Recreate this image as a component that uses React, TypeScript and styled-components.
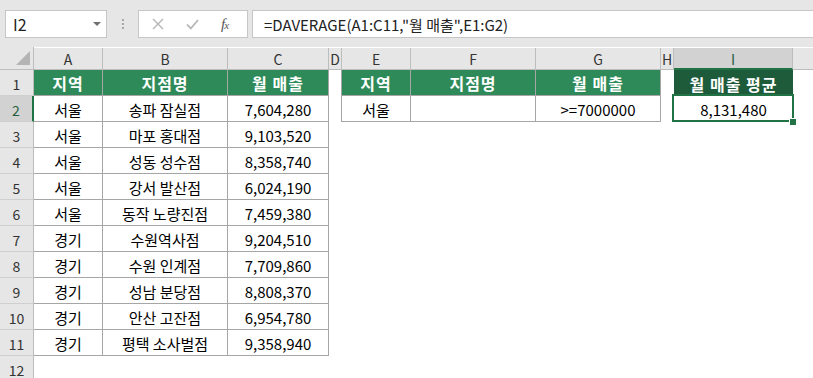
import React from 'react';
import styled, { createGlobalStyle, css } from 'styled-components';

const GREEN = '#2e8a59';
const DARK_GREEN = '#1e5b3b';
const SEL = '#217346';
const LINE = '#a6a6a6';
const FONT = `"Noto Sans CJK KR", "Noto Sans", sans-serif`;

const Global = createGlobalStyle`
  html, body { margin: 0; padding: 0; background: #ffffff; }
  body { font-family: ${FONT}; overflow: hidden; }
  * { box-sizing: border-box; }
`;

const Page = styled.div`
  width: 813px;
  height: 378px;
  overflow: hidden;
  background: #ffffff;
`;

const FormulaBar = styled.div`
  height: 47px;
  background: #e6e6e6;
  display: flex;
  align-items: flex-start;
  padding: 10px 0 0 5px;
`;

const NameBox = styled.div`
  width: 102px;
  height: 28px;
  background: #ffffff;
  border: 1px solid #c6c6c6;
  display: flex;
  align-items: center;
  justify-content: space-between;
  padding: 0 5px 0 7px;
  font-size: 16px;
  color: #222;
`;

const Caret = styled.span`
  width: 0;
  height: 0;
  border-left: 4px solid transparent;
  border-right: 4px solid transparent;
  border-top: 4px solid #6f6f6f;
`;

const Grip = styled.div`
  width: 31px;
  height: 28px;
  display: flex;
  flex-direction: column;
  align-items: center;
  justify-content: center;
  gap: 2px;
`;

const GripDot = styled.span`
  width: 2px;
  height: 2px;
  background: #a8a8a8;
`;

const FxBox = styled.div`
  width: 110px;
  height: 28px;
  background: #ffffff;
  border: 1px solid #c6c6c6;
  display: flex;
  align-items: center;
  padding-left: 13px;
  gap: 22px;
`;

const FxLabel = styled.span`
  font-family: "Liberation Serif", serif;
  font-style: italic;
  font-size: 15px;
  color: #555;
  letter-spacing: -1px;
  & small { font-size: 11px; }
`;

const Input = styled.div`
  flex: 1;
  margin-left: 4px;
  height: 28px;
  background: #ffffff;
  border: 1px solid #c6c6c6;
  border-right: none;
  display: flex;
  align-items: center;
  padding-left: 11px;
  font-size: 15px;
  color: #222;
  white-space: nowrap;
`;

const Sheet = styled.div`
  display: grid;
  grid-template-columns: 34px 69px 125px 101px 13px 69px 125px 125px 13px 119px 1fr;
  grid-template-rows: 23px;
  grid-auto-rows: 26px;
`;

const Corner = styled.div`
  background: #e6e6e6;
  border-right: 1px solid #bdbdbd;
  border-bottom: 1px solid #bdbdbd;
  position: relative;
`;

const CornerTri = styled.span`
  position: absolute;
  right: 3px;
  bottom: 4px;
  width: 0;
  height: 0;
  border-left: 14px solid transparent;
  border-bottom: 14px solid #b4b4b4;
`;

const ColHead = styled.div<{ $active?: boolean; $last?: boolean }>`
  background: ${(p) => (p.$active ? '#d2d2d2' : '#e6e6e6')};
  border-right: ${(p) => (p.$last ? 'none' : '1px solid #bdbdbd')};
  border-bottom: ${(p) => (p.$active ? `2px solid ${SEL}` : '1px solid #bdbdbd')};
  display: flex;
  align-items: center;
  justify-content: center;
  font-size: 14px;
  color: ${(p) => (p.$active ? '#1f5f3d' : '#333')};
  padding-top: ${(p) => (p.$active ? '2px' : '1px')};
  clip-path: inset(1px 0 0 0);
`;

const RowHead = styled.div<{ $active?: boolean }>`
  background: ${(p) => (p.$active ? '#d2d2d2' : '#e6e6e6')};
  border-right: ${(p) => (p.$active ? `2px solid ${SEL}` : '1px solid #bdbdbd')};
  border-bottom: 1px solid #cfcfcf;
  display: flex;
  align-items: center;
  justify-content: center;
  padding-top: 2px;
  font-size: 14px;
  color: ${(p) => (p.$active ? '#1f5f3d' : '#333')};
`;

type Kind = 'blank' | 'head' | 'headDark' | 'data' | 'selected';

const Cell = styled.div<{ $kind: Kind; $ruleRight?: boolean }>`
  display: flex;
  align-items: center;
  justify-content: center;
  padding-top: 1px;
  font-size: 15px;
  color: #000;
  white-space: nowrap;
  position: relative;
  ${(p) =>
    p.$kind === 'blank' &&
    css`
      border-right: ${p.$ruleRight ? `1px solid ${LINE}` : 'none'};
    `}
  ${(p) =>
    p.$kind !== 'blank' &&
    css`
      border-right: 1px solid ${LINE};
      border-bottom: 1px solid ${LINE};
    `}
  ${(p) =>
    p.$kind === 'head' &&
    css`
      background: ${GREEN};
      color: #ffffff;
      font-weight: 700;
      font-size: 16px;
      letter-spacing: 1px;
    `}
  ${(p) =>
    p.$kind === 'headDark' &&
    css`
      background: ${DARK_GREEN};
      color: #ffffff;
      font-weight: 700;
      font-size: 16px;
      letter-spacing: 1px;
      border-right: none;
      border-bottom: none;
    `}
  ${(p) =>
    p.$kind === 'selected' &&
    css`
      border-right: none;
      border-bottom: 1px solid transparent;
      &::after {
        content: '';
        position: absolute;
        top: -2px;
        left: -2px;
        right: -1px;
        bottom: -1px;
        border: 2px solid ${SEL};
      }
      &::before {
        content: '';
        position: absolute;
        right: -3px;
        bottom: -4px;
        width: 6px;
        height: 6px;
        background: ${SEL};
        outline: 1px solid #ffffff;
        z-index: 1;
      }
    `}
`;

const cols = ['A', 'B', 'C', 'D', 'E', 'F', 'G', 'H', 'I', ''];

const data: [string, string, string][] = [
  ['서울', '송파 잠실점', '7,604,280'],
  ['서울', '마포 홍대점', '9,103,520'],
  ['서울', '성동 성수점', '8,358,740'],
  ['서울', '강서 발산점', '6,024,190'],
  ['서울', '동작 노량진점', '7,459,380'],
  ['경기', '수원역사점', '9,204,510'],
  ['경기', '수원 인계점', '7,709,860'],
  ['경기', '성남 분당점', '8,808,370'],
  ['경기', '안산 고잔점', '6,954,780'],
  ['경기', '평택 소사벌점', '9,358,940'],
];

type CellSpec = { kind: Kind; text?: string; ruleRight?: boolean };

function rowCells(r: number): CellSpec[] {
  const blank: CellSpec = { kind: 'blank' };
  if (r === 1) {
    return [
      { kind: 'head', text: '지역' },
      { kind: 'head', text: '지점명' },
      { kind: 'head', text: '월 매출' },
      { kind: 'blank', ruleRight: true },
      { kind: 'head', text: '지역' },
      { kind: 'head', text: '지점명' },
      { kind: 'head', text: '월 매출' },
      blank,
      { kind: 'headDark', text: '월 매출 평균' },
      blank,
    ];
  }
  const d = data[r - 2];
  const left: CellSpec[] = d
    ? [
        { kind: 'data', text: d[0] },
        { kind: 'data', text: d[1] },
        { kind: 'data', text: d[2] },
      ]
    : [blank, blank, blank];
  if (r === 2) {
    return [
      ...left,
      { kind: 'blank', ruleRight: true },
      { kind: 'data', text: '서울' },
      { kind: 'data', text: '' },
      { kind: 'data', text: '>=7000000' },
      blank,
      { kind: 'selected', text: '8,131,480' },
      blank,
    ];
  }
  return [...left, blank, blank, blank, blank, blank, blank, blank];
}

export default function App() {
  const rows = Array.from({ length: 12 }, (_, i) => i + 1);
  return (
    <Page>
      <Global />
      <FormulaBar>
        <NameBox>
          <span>I2</span>
          <Caret />
        </NameBox>
        <Grip>
          <GripDot />
          <GripDot />
          <GripDot />
        </Grip>
        <FxBox>
          <svg width="12" height="12" viewBox="0 0 12 12">
            <path d="M1 1 L11 11 M11 1 L1 11" stroke="#b5b5b5" strokeWidth="1.4" fill="none" />
          </svg>
          <svg width="13" height="11" viewBox="0 0 13 11">
            <path d="M1 5.5 L4.8 9.5 L12 1" stroke="#b5b5b5" strokeWidth="1.8" fill="none" />
          </svg>
          <FxLabel>
            f<small>x</small>
          </FxLabel>
        </FxBox>
        <Input>=DAVERAGE(A1:C11,"월 매출",E1:G2)</Input>
      </FormulaBar>
      <Sheet>
        <Corner>
          <CornerTri />
        </Corner>
        {cols.map((c, i) => (
          <ColHead key={i} $active={c === 'I'} $last={c === ''}>
            {c}
          </ColHead>
        ))}
        {rows.map((r) => (
          <React.Fragment key={r}>
            <RowHead $active={r === 2}>{r}</RowHead>
            {rowCells(r).map((c, i) => (
              <Cell key={i} $kind={c.kind} $ruleRight={c.ruleRight}>
                {c.text}
              </Cell>
            ))}
          </React.Fragment>
        ))}
      </Sheet>
    </Page>
  );
}
